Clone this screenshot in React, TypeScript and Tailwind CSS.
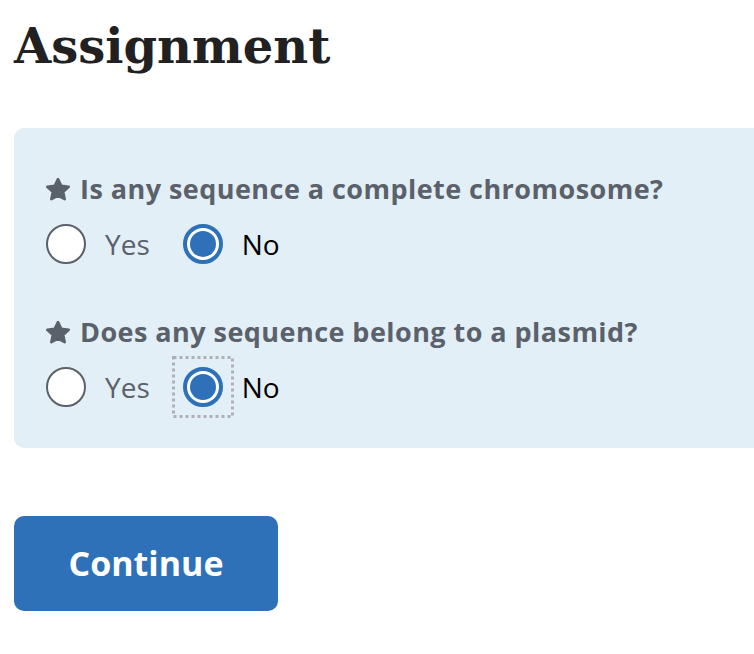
import React, { useState } from "react";

const sans = "font-['Open_Sans','Lato',sans-serif]";

function Star() {
  return (
    <svg viewBox="1 1.5 22 21" className="h-[23px] w-[24px] shrink-0" aria-hidden="true">
      <path
        d="M12 2.4l3 6.2 6.8.9-5 4.7 1.3 6.7L12 17.6l-6.1 3.3 1.3-6.7-5-4.7 6.8-.9z"
        fill="#5b616b"
        stroke="#5b616b"
        strokeWidth="2.4"
        strokeLinejoin="round"
      />
    </svg>
  );
}

function FocusRing() {
  return (
    <svg className="pointer-events-none absolute left-[-11px] top-[-11px] h-[62px] w-[62px]" viewBox="0 0 62 62" aria-hidden="true">
      <rect x="1.5" y="1.5" width="59" height="59" fill="none" stroke="#aeb0b5" strokeWidth="3" strokeDasharray="3 3" />
    </svg>
  );
}

function Radio({ checked, focused, label, onSelect }: { checked: boolean; focused?: boolean; label: string; onSelect: () => void }) {
  return (
    <label className="flex items-center cursor-pointer" onClick={onSelect}>
      <span className="relative">
        <span
          className={
            "flex h-[40px] w-[40px] shrink-0 items-center justify-center rounded-full bg-white " +
            (checked ? "border-4 border-[#2e71b8] p-[3px]" : "border-2 border-[#5b616b]")
          }
        >
          {checked && <span className="h-full w-full rounded-full bg-[#2e71b8]" />}
        </span>
        {focused && <FocusRing />}
      </span>
      <span className={"ml-[19px] text-[28px] leading-none " + (checked ? "text-black" : "text-[#5b616b]")}>{label}</span>
    </label>
  );
}

function Question({ title, value, focused, onChange }: { title: string; value: string; focused?: boolean; onChange: (v: string) => void }) {
  return (
    <fieldset>
      <legend className="flex items-center gap-[10px] text-[27px] font-bold leading-[32px] tracking-[0.45px] text-[#5b616b]">
        <Star />
        {title}
      </legend>
      <div className="mt-[19px] flex items-center gap-[33px]">
        <Radio label="Yes" checked={value === "yes"} onSelect={() => onChange("yes")} />
        <Radio label="No" checked={value === "no"} focused={focused} onSelect={() => onChange("no")} />
      </div>
    </fieldset>
  );
}

export default function App() {
  const [chromosome, setChromosome] = useState("no");
  const [plasmid, setPlasmid] = useState("no");

  return (
    <div className={"min-h-[654px] bg-white pl-[14px] pt-[14px] " + sans}>
      <h1 className="font-['DejaVu_Serif',serif] text-[48px] font-bold leading-[64px] text-[#212121]">Assignment</h1>

      <div className="mt-[50px] rounded-l-[10px] bg-[#e3eff6] pb-[41px] pl-[32px] pt-[45px]">
        <Question title="Is any sequence a complete chromosome?" value={chromosome} onChange={setChromosome} />
        <div className="mt-[52px]">
          <Question title="Does any sequence belong to a plasmid?" value={plasmid} focused onChange={setPlasmid} />
        </div>
      </div>

      <button className="mt-[68px] flex h-[95px] w-[264px] items-center justify-center rounded-[10px] bg-[#2e71b8] text-[34px] font-bold text-white">
        Continue
      </button>
    </div>
  );
}
